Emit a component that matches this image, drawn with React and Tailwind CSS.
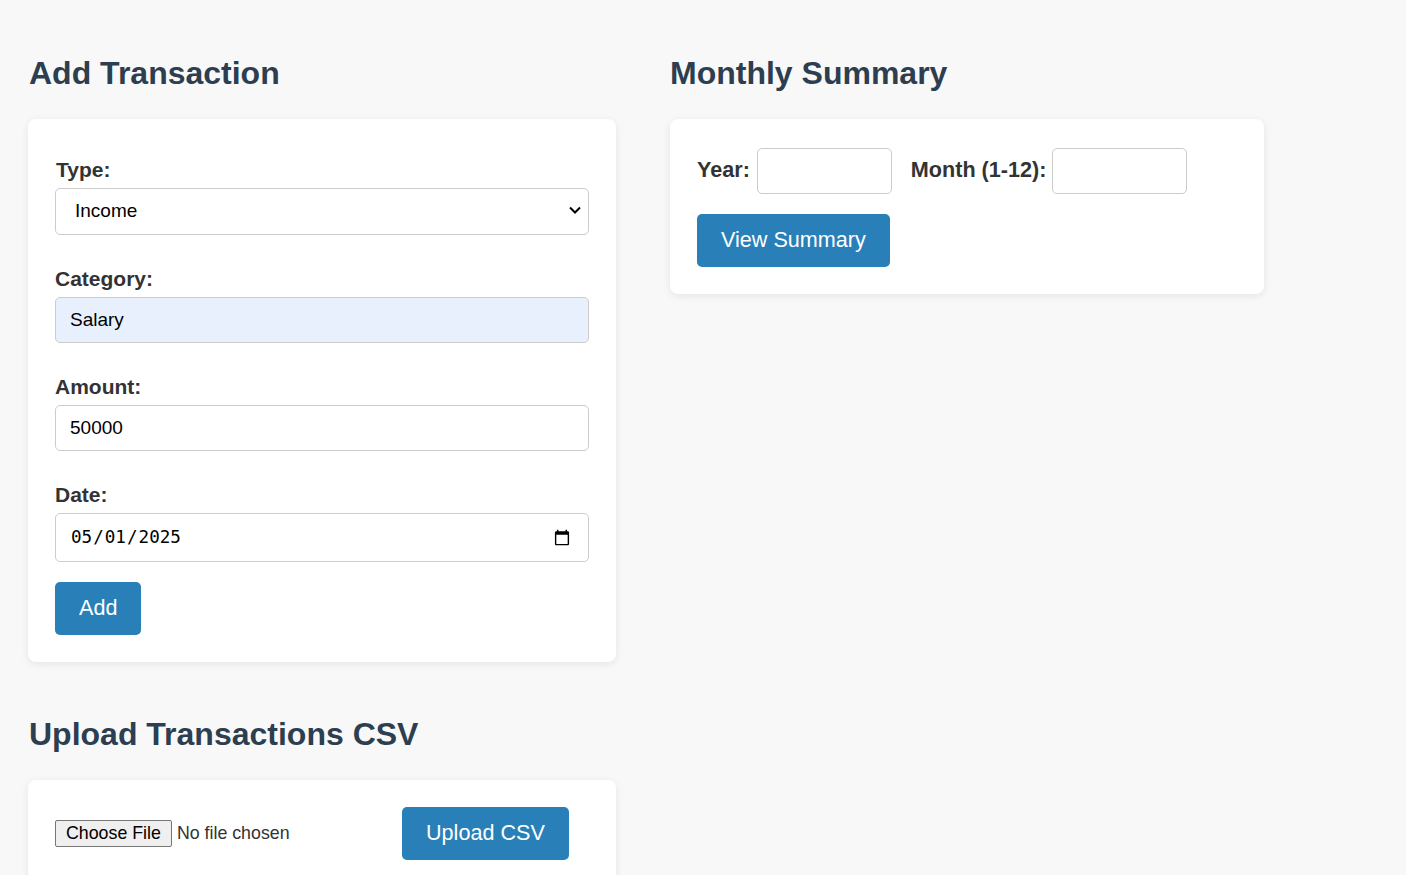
export default function App() {
  const font = { fontFamily: '"Liberation Sans", Arial, sans-serif' };
  return (
    <div className="min-h-screen bg-[#f8f8f8] text-[#333] px-[28px] pt-[28px]" style={font}>
      <div className="flex items-start gap-[54px]">
        {/* Left column */}
        <div className="w-[588px] shrink-0">
          <section>
            <h2 className="mt-[27px] mb-[27px] text-[32px] leading-[37px] font-bold text-[#2c3e50] pl-[1px]">
              Add Transaction
            </h2>
            <form
              className="bg-white rounded-[8px] shadow-[0_2px_8px_rgba(0,0,0,0.08)] px-[27px] pt-[39px] pb-[27px]"
              onSubmit={(e) => e.preventDefault()}
            >
              <div className="mb-[32px]">
                <label className="block text-[21px] leading-[24px] font-bold text-[#333] mb-[6px] pl-[1px]">Type:</label>
                <div className="relative">
                  <select
                    defaultValue="income"
                    className="block w-full h-[47px] appearance-none border border-[#ccc] rounded-[5px] bg-white pl-[19px] pr-[30px] text-[19px] text-black outline-none"
                    style={font}
                  >
                    <option value="income">Income</option>
                    <option value="expense">Expense</option>
                  </select>
                  <svg
                    className="absolute right-[7px] top-[17px] pointer-events-none"
                    width="14"
                    height="10"
                    viewBox="0 0 14 10"
                    fill="none"
                  >
                    <path d="M2 2.5 L7 7.5 L12 2.5" stroke="#000" strokeWidth="2" />
                  </svg>
                </div>
              </div>
              <div className="mb-[32px]">
                <label className="block text-[21px] leading-[24px] font-bold text-[#333] mb-[6px]">Category:</label>
                <input
                  defaultValue="Salary"
                  className="block w-full h-[46px] border border-[#ccc] rounded-[5px] bg-[#e8f0fe] px-[14px] text-[19px] text-black outline-none"
                  style={font}
                />
              </div>
              <div className="mb-[32px]">
                <label className="block text-[21px] leading-[24px] font-bold text-[#333] mb-[6px]">Amount:</label>
                <input
                  defaultValue="50000"
                  className="block w-full h-[46px] border border-[#ccc] rounded-[5px] bg-white px-[14px] text-[19px] text-black outline-none"
                  style={font}
                />
              </div>
              <div className="mb-[20px]">
                <label className="block text-[21px] leading-[24px] font-bold text-[#333] mb-[6px]">Date:</label>
                <input
                  type="date"
                  defaultValue="2025-05-01"
                  className="block w-full h-[49px] border border-[#ccc] rounded-[5px] bg-white pl-[14px] pr-[15px] text-[17.6px] text-black outline-none"
                  style={{ fontFamily: '"DejaVu Sans Mono", monospace' }}
                />
              </div>
              <button
                type="submit"
                className="h-[53px] px-[24px] rounded-[5px] bg-[#2980b9] text-white text-[21.6px]"
                style={font}
              >
                Add
              </button>
            </form>
          </section>

          <section>
            <h2 className="mt-[54px] mb-[27px] text-[32px] leading-[37px] font-bold text-[#2c3e50] pl-[1px]">
              Upload Transactions CSV
            </h2>
            <div className="bg-white rounded-[8px] shadow-[0_2px_8px_rgba(0,0,0,0.08)] px-[27px] pt-[27px] pb-[27px] flex items-center">
              <input
                type="file"
                className="w-[347px] text-[17.8px] leading-[25px] text-[#333] file:text-black file:px-[10px] file:py-0 file:h-[27px] file:mr-[5px] file:border file:border-[#767676] file:rounded-[2px] file:bg-[#efefef]"
                style={font}
              />
              <button
                className="h-[53px] px-[24px] rounded-[5px] bg-[#2980b9] text-white text-[21.6px]"
                style={font}
              >
                Upload CSV
              </button>
            </div>
          </section>
        </div>

        {/* Right column */}
        <div className="w-[594px] shrink-0">
          <section>
            <h2 className="mt-[27px] mb-[27px] text-[32px] leading-[37px] font-bold text-[#2c3e50]">
              Monthly Summary
            </h2>
            <div className="bg-white rounded-[8px] shadow-[0_2px_8px_rgba(0,0,0,0.08)] px-[27px] pt-[29px] pb-[27px]">
              <div className="flex items-center">
                <label className="text-[21.6px] font-bold text-[#333] mr-[7px] -mt-[2px]">Year:</label>
                <input
                  className="w-[135px] h-[46px] border border-[#ccc] rounded-[5px] bg-white px-[10px] text-[19px] outline-none"
                  style={font}
                />
                <label className="ml-[19px] text-[21.6px] font-bold text-[#333] mr-[6px] -mt-[2px]">Month (1-12):</label>
                <input
                  className="w-[135px] h-[46px] border border-[#ccc] rounded-[5px] bg-white px-[10px] text-[19px] outline-none"
                  style={font}
                />
              </div>
              <button
                className="mt-[20px] h-[53px] px-[24px] rounded-[5px] bg-[#2980b9] text-white text-[21.6px]"
                style={font}
              >
                View Summary
              </button>
            </div>
          </section>
        </div>
      </div>
    </div>
  );
}
